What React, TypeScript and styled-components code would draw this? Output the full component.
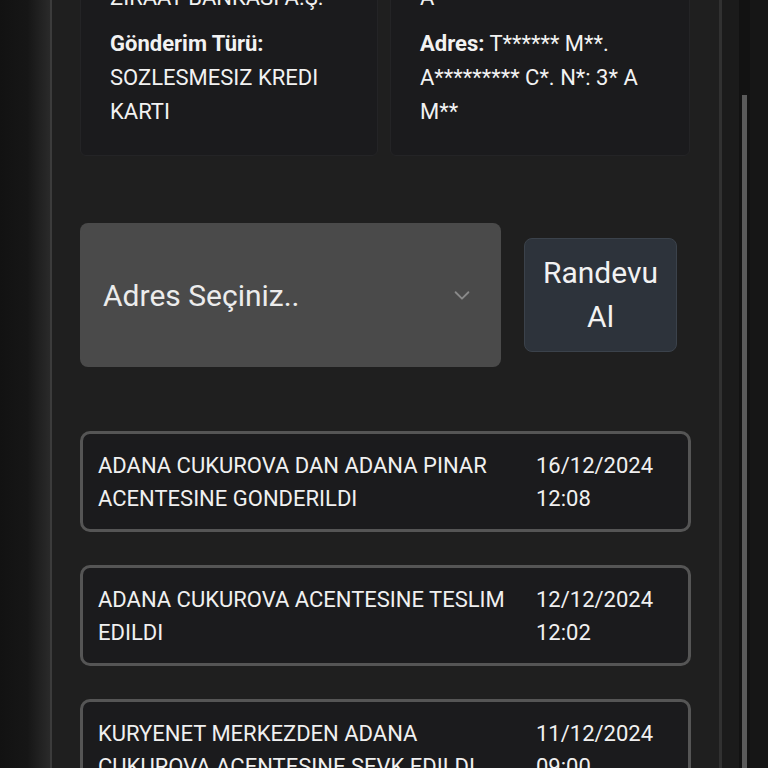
import React from 'react';
import styled, { createGlobalStyle } from 'styled-components';

const GlobalStyle = createGlobalStyle`
  html, body {
    margin: 0;
    padding: 0;
    background: #141414;
  }
  body {
    font-family: Roboto, "Noto Sans", "Liberation Sans", sans-serif;
    color: #f2f2f2;
  }
`;

const Screen = styled.div`
  display: flex;
  height: 768px;
  overflow: hidden;
  background: #141414;
`;

const Gutter = styled.div`
  flex: 0 0 50px;
  background: linear-gradient(to right, #121212 0%, #161616 55%, #2a2a2a 100%);
`;

const Panel = styled.main`
  flex: 0 0 672px;
  box-sizing: border-box;
  background: #1f1f1f;
  border-left: 2px solid #3b3b3b;
  border-right: 3px solid #313131;
  padding: 0 28px;
`;

const ScrollArea = styled.div`
  flex: 1;
  display: flex;
  background: #161616;
`;

const ScrollGap = styled.div`
  flex: 0 0 17px;
  background: #1b1b1b;
`;

const ScrollTrack = styled.div`
  flex: 0 0 11px;
  background: #121212;
  padding: 95px 3px 0;
  box-sizing: border-box;
`;

const ScrollThumb = styled.div`
  height: 100%;
  background: #5a5a5a;
`;

const InfoGrid = styled.section`
  display: grid;
  grid-template-columns: 298px 300px;
  gap: 12px;
  margin-top: -44px;
`;

const InfoCard = styled.div`
  background: #1b1b1d;
  border: 1px solid #242426;
  border-radius: 6px;
  padding: 24px 20px 26px 29px;
`;

const Field = styled.p`
  margin: 0 0 12px;
  font-size: 22px;
  line-height: 34px;
  &:last-child {
    margin-bottom: 0;
  }
`;

const Label = styled.span`
  font-weight: 700;
`;

const ActionRow = styled.div`
  display: flex;
  align-items: center;
  gap: 23px;
  margin-top: 67px;
`;

const Select = styled.div`
  flex: 0 0 421px;
  height: 144px;
  box-sizing: border-box;
  background: #4a4a4a;
  border-radius: 8px;
  display: flex;
  align-items: center;
  justify-content: space-between;
  padding: 0 28px 0 23px;
  font-size: 30px;
  color: #ececec;
`;

const Chevron = styled.svg`
  width: 22px;
  height: 22px;
`;

const Button = styled.button`
  width: 153px;
  height: 114px;
  background: #2d333b;
  border: 1px solid #3b424b;
  border-radius: 8px;
  color: #f2f2f2;
  font-family: inherit;
  font-size: 30px;
  line-height: 44px;
  padding: 0 10px;
`;

const EventList = styled.section`
  display: flex;
  flex-direction: column;
  gap: 33px;
  margin-top: 64px;
`;

const EventCard = styled.div`
  display: grid;
  grid-template-columns: 1fr 140px;
  gap: 18px;
  background: #1b1b1d;
  border: 3px solid #555555;
  border-radius: 10px;
  padding: 15px 12px 14px 15px;
  font-size: 22px;
  line-height: 33px;
  color: #f0f0f0;
`;

const events = [
  { text: 'ADANA CUKUROVA DAN ADANA PINAR ACENTESINE GONDERILDI', date: '16/12/2024', time: '12:08' },
  { text: 'ADANA CUKUROVA ACENTESINE TESLIM EDILDI', date: '12/12/2024', time: '12:02' },
  { text: 'KURYENET MERKEZDEN ADANA CUKUROVA ACENTESINE SEVK EDILDI', date: '11/12/2024', time: '09:00' },
];

export default function App() {
  return (
    <>
      <GlobalStyle />
      <Screen>
        <Gutter />
        <Panel>
          <InfoGrid>
            <InfoCard>
              <Field>ZİRAAT BANKASI A.Ş.</Field>
              <Field>
                <Label>Gönderim Türü:</Label>
                <br />
                SOZLESMESIZ KREDI KARTI
              </Field>
            </InfoCard>
            <InfoCard>
              <Field>A</Field>
              <Field>
                <Label>Adres:</Label> T****** M**. A********* C*. N*: 3* A M**
              </Field>
            </InfoCard>
          </InfoGrid>

          <ActionRow>
            <Select>
              <span>Adres Seçiniz..</span>
              <Chevron viewBox="0 0 24 24" fill="none" stroke="#8a8a8a" strokeWidth="2" strokeLinecap="round" strokeLinejoin="round">
                <path d="M5 9l7 7 7-7" />
              </Chevron>
            </Select>
            <Button>Randevu Al</Button>
          </ActionRow>

          <EventList>
            {events.map((e) => (
              <EventCard key={e.date + e.time}>
                <div>{e.text}</div>
                <div>
                  {e.date}
                  <br />
                  {e.time}
                </div>
              </EventCard>
            ))}
          </EventList>
        </Panel>
        <ScrollArea>
          <ScrollGap />
          <ScrollTrack>
            <ScrollThumb />
          </ScrollTrack>
        </ScrollArea>
      </Screen>
    </>
  );
}
